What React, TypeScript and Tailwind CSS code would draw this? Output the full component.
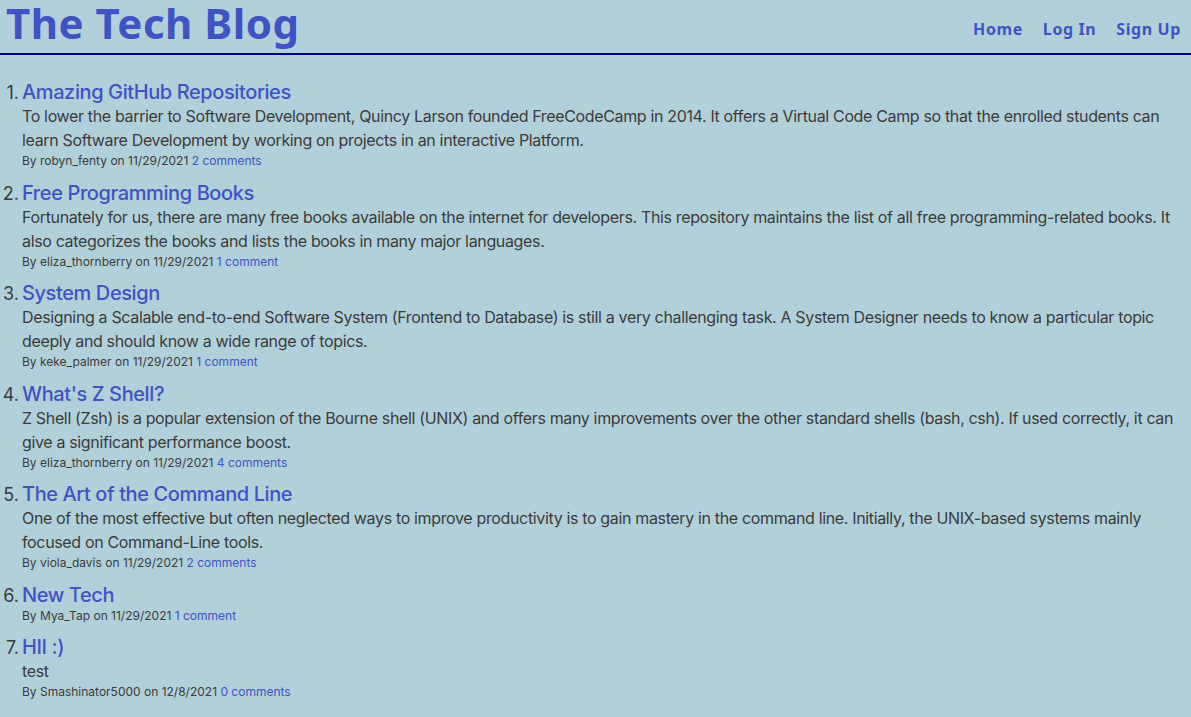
const posts = [
  {
    title: "Amazing GitHub Repositories",
    body: "To lower the barrier to Software Development, Quincy Larson founded FreeCodeCamp in 2014. It offers a Virtual Code Camp so that the enrolled students can learn Software Development by working on projects in an interactive Platform.",
    author: "robyn_fenty",
    date: "11/29/2021",
    comments: "2 comments",
  },
  {
    title: "Free Programming Books",
    body: "Fortunately for us, there are many free books available on the internet for developers. This repository maintains the list of all free programming-related books. It also categorizes the books and lists the books in many major languages.",
    author: "eliza_thornberry",
    date: "11/29/2021",
    comments: "1 comment",
  },
  {
    title: "System Design",
    body: "Designing a Scalable end-to-end Software System (Frontend to Database) is still a very challenging task. A System Designer needs to know a particular topic deeply and should know a wide range of topics.",
    author: "keke_palmer",
    date: "11/29/2021",
    comments: "1 comment",
  },
  {
    title: "What's Z Shell?",
    body: "Z Shell (Zsh) is a popular extension of the Bourne shell (UNIX) and offers many improvements over the other standard shells (bash, csh). If used correctly, it can give a significant performance boost.",
    author: "eliza_thornberry",
    date: "11/29/2021",
    comments: "4 comments",
  },
  {
    title: "The Art of the Command Line",
    body: "One of the most effective but often neglected ways to improve productivity is to gain mastery in the command line. Initially, the UNIX-based systems mainly focused on Command-Line tools.",
    author: "viola_davis",
    date: "11/29/2021",
    comments: "2 comments",
  },
  {
    title: "New Tech",
    body: "",
    author: "Mya_Tap",
    date: "11/29/2021",
    comments: "1 comment",
  },
  {
    title: "HII :)",
    body: "test",
    author: "Smashinator5000",
    date: "12/8/2021",
    comments: "0 comments",
  },
]

const App = () => {
  return (
    <div className="min-h-[717px] bg-[#b2d0da] font-['Inter',sans-serif] text-[#3b3b3b]">
      <header className="h-[55px] flex items-start justify-between pl-[6px] pr-[10px] border-b-2 border-[#000080]">
        <h1 className="font-['Noto_Sans',sans-serif] font-bold text-[42px] leading-[46px] tracking-[0.5px] text-[#4152c4]">The Tech Blog</h1>
        <nav className="flex gap-[20px] font-['Noto_Sans',sans-serif] font-bold text-[16px] leading-[24px] text-[#4152c4] tracking-[0.6px] pt-[17px]">
          <a href="#">Home</a>
          <a href="#">Log In</a>
          <a href="#">Sign Up</a>
        </nav>
      </header>

      <ol className="pt-[25px] pr-[8px] flex flex-col gap-[11.5px]">
        {posts.map((post, i) => (
          <li key={post.title} className="flex">
            <span className="w-[22px] shrink-0 pr-[3px] text-right text-[18px] leading-[24px] pt-[1px]">{i + 1}.</span>
            <div className="flex flex-col">
              <a href="#" className="text-[20px] leading-[24px] font-medium tracking-[-0.4px] text-[#4152c4]">{post.title}</a>
              {post.body && <p className="text-[16px] leading-[24px] tracking-[-0.35px]">{post.body}</p>}
              <p className="text-[12px] leading-[17px]">
                By {post.author} on {post.date} <a href="#" className="text-[#4152c4]">{post.comments}</a>
              </p>
            </div>
          </li>
        ))}
      </ol>
    </div>
  )
}

export default App
